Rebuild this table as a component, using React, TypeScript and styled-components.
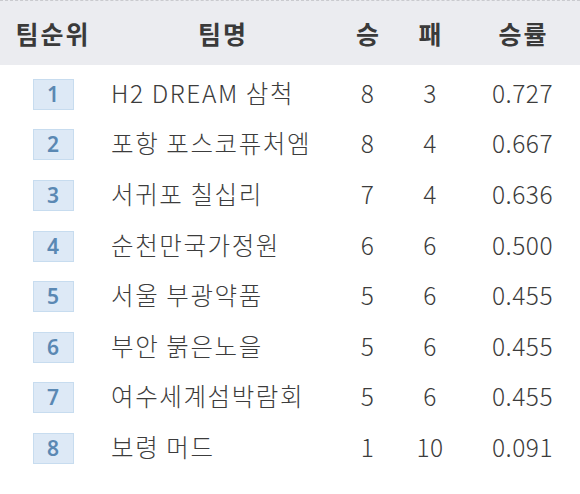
import styled, { createGlobalStyle } from 'styled-components';

const GlobalStyle = createGlobalStyle`
   html, body {
      margin: 0;
      padding: 0;
      background: #ffffff;
   }
   body {
      font-family: 'Noto Sans CJK KR', 'Noto Sans', sans-serif;
   }
`;

const standings = [
   { rank: 1, team: 'H2 DREAM 삼척', win: 8, loss: 3, rate: '0.727' },
   { rank: 2, team: '포항 포스코퓨처엠', win: 8, loss: 4, rate: '0.667' },
   { rank: 3, team: '서귀포 칠십리', win: 7, loss: 4, rate: '0.636' },
   { rank: 4, team: '순천만국가정원', win: 6, loss: 6, rate: '0.500' },
   { rank: 5, team: '서울 부광약품', win: 5, loss: 6, rate: '0.455' },
   { rank: 6, team: '부안 붉은노을', win: 5, loss: 6, rate: '0.455' },
   { rank: 7, team: '여수세계섬박람회', win: 5, loss: 6, rate: '0.455' },
   { rank: 8, team: '보령 머드', win: 1, loss: 10, rate: '0.091' },
];

const Table = styled.div`
   width: 580px;
   height: 494px;
   background: #ffffff;
`;

const Row = styled.div`
   display: grid;
   grid-template-columns: 104px 236px 55px 70px 115px;
   align-items: center;
`;

const HeaderRow = styled(Row)`
   height: 65px;
   background: #ebecf0;
   border-top: 1px dashed #c9cace;
   box-sizing: border-box;
   margin-bottom: 4px;
`;

const BodyRow = styled(Row)`
   height: 50.6px;
`;

const HeadCell = styled.div`
   text-align: center;
   font-size: 25px;
   font-weight: 700;
   color: #3a3a3a;
   letter-spacing: 2px;
   padding-left: 2px;
`;

const Cell = styled.div<{ $align?: 'left' | 'center' }>`
   text-align: ${(p) => p.$align ?? 'center'};
   font-size: 24.5px;
   font-weight: 300;
   color: #3c3c3c;
   white-space: nowrap;
   letter-spacing: ${(p) => (p.$align === 'left' ? '1.6px' : '0.5px')};
   padding-left: ${(p) => (p.$align === 'left' ? '7px' : '0')};
   margin-top: -4px;
`;

const RankCell = styled.div`
   display: flex;
   justify-content: center;
   padding-left: 2px;
`;

const RankBadge = styled.div`
   width: 41px;
   height: 31px;
   box-sizing: border-box;
   border: 1px solid #c7dcef;
   background: #dde9f6;
   display: flex;
   align-items: center;
   justify-content: center;
   font-family: 'Noto Sans', 'Liberation Sans', sans-serif;
   font-size: 21px;
   line-height: 1;
   font-weight: 600;
   color: #5a88b3;
`;

export default function App(): JSX.Element {
   return (
      <>
         <GlobalStyle />
         <Table>
            <HeaderRow>
               <HeadCell>팀순위</HeadCell>
               <HeadCell>팀명</HeadCell>
               <HeadCell>승</HeadCell>
               <HeadCell>패</HeadCell>
               <HeadCell>승률</HeadCell>
            </HeaderRow>
            {standings.map((s) => (
               <BodyRow key={s.rank}>
                  <RankCell>
                     <RankBadge>{s.rank}</RankBadge>
                  </RankCell>
                  <Cell $align="left">{s.team}</Cell>
                  <Cell>{s.win}</Cell>
                  <Cell>{s.loss}</Cell>
                  <Cell>{s.rate}</Cell>
               </BodyRow>
            ))}
         </Table>
      </>
   );
}
